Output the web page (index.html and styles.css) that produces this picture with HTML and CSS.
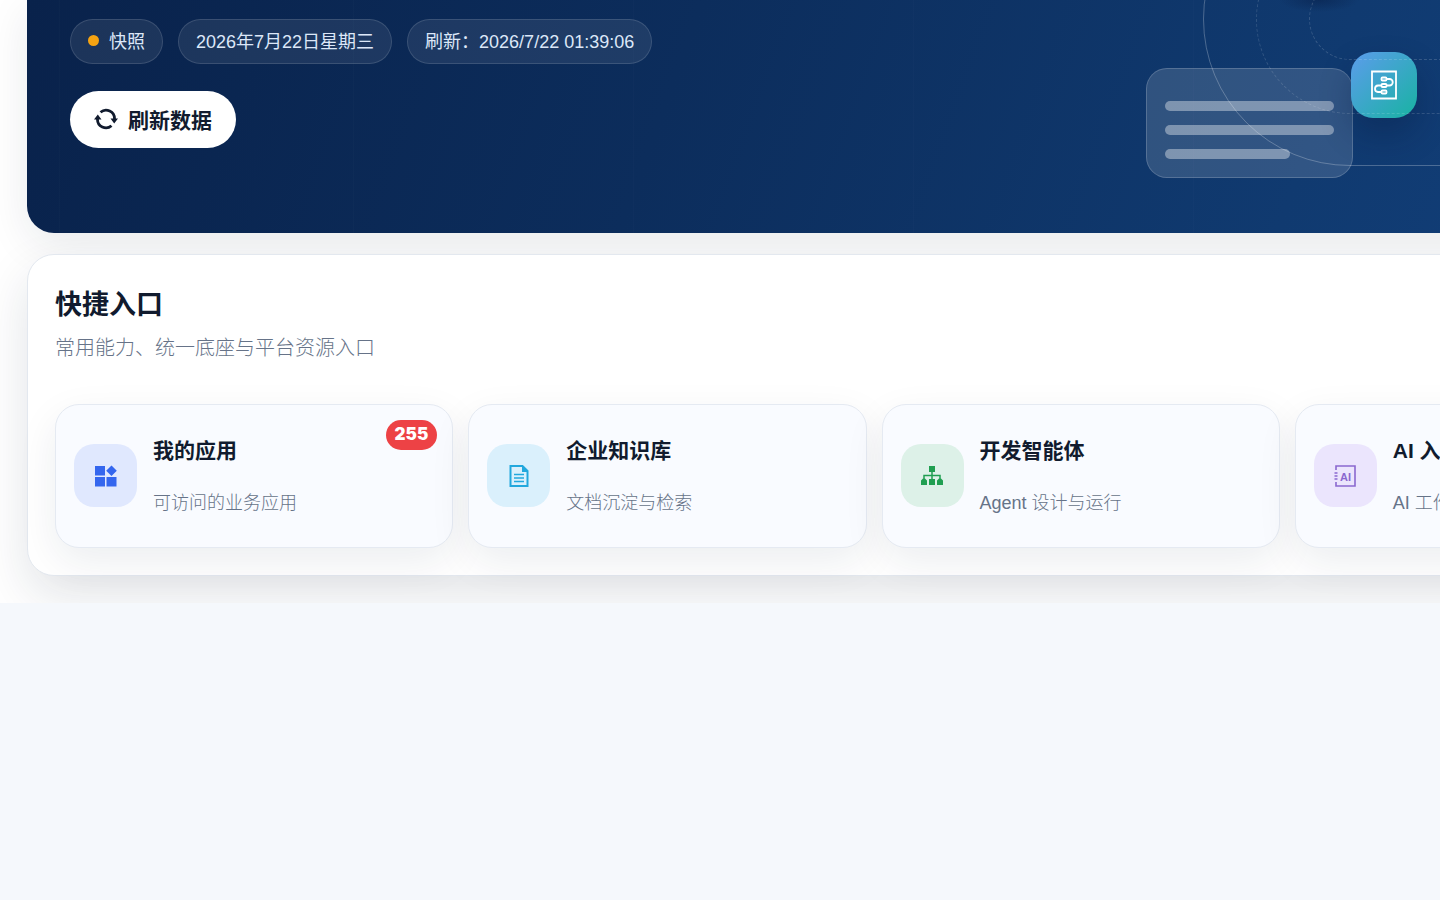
FILE: index.html
```html
<!DOCTYPE html>
<html lang="zh-CN">
<head>
<meta charset="utf-8">
<title>快捷入口</title>
<link rel="stylesheet" href="styles.css">
</head>
<body>
<main class="workspace">
  <section class="hero">
    <div class="hero-content">
      <div class="chips">
        <span class="chip"><i class="dot"></i>快照</span>
        <span class="chip">2026年7月22日星期三</span>
        <span class="chip">刷新：2026/7/22 01:39:06</span>
      </div>
      <button class="refresh" type="button">
        <svg width="24" height="24" viewBox="0 0 24 24" fill="none" stroke="currentColor" stroke-width="2.8" aria-hidden="true">
          <path d="M6.500 5.200A8.500 8.500 0 0 1 20.500 12"/><path d="M17.500 18.800A8.500 8.500 0 0 1 3.500 12"/>
          <path d="M16.500 11.500h7.500l-3.800 5zM0 12.500h7.500l-3.700-5z" fill="currentColor" stroke="none"/>
        </svg>
        <span>刷新数据</span>
      </button>
    </div>
    <div class="art" aria-hidden="true">
      <div class="sheet"><i class="bar"></i><i class="bar"></i><i class="bar short"></i></div>
      <div class="node">
        <svg width="30" height="32" viewBox="0 0 30 32" fill="none" stroke="#fff" stroke-width="1.800">
          <path d="M3 2.500h24v27H3z"/>
          <rect x="12.500" y="8.500" width="5" height="3" rx="1"/><rect x="12.500" y="15" width="5" height="3" rx="1"/><rect x="12.500" y="21.500" width="5" height="3" rx="1"/>
          <path d="M18 10h2.500a3.200 3.200 0 0 1 0 6.500H18M12 16.500H9a3.200 3.200 0 0 0-3 3.200a3.200 3.200 0 0 0 3 3.300H12"/>
        </svg>
      </div>
      <i class="ring outer"></i><i class="ring middle"></i><i class="ring inner"></i>
    </div>
  </section>

  <section class="panel">
    <h2>快捷入口</h2>
    <p class="subtitle">常用能力、统一底座与平台资源入口</p>
    <div class="cards">
      <a class="card" href="#">
        <span class="icon blue"><svg width="24" height="24" viewBox="0 0 24 24" fill="currentColor" aria-hidden="true"><path d="M1 2h10v9.500H1zM1 13h10v9.500H1zM12.500 13h10v9.500h-10zM17.500 1.500l5.300 5.200-5.300 5.300-5.300-5.300z"/></svg></span>
        <span class="text"><strong>我的应用</strong><small>可访问的业务应用</small></span>
        <b class="badge">255</b>
      </a>
      <a class="card" href="#">
        <span class="icon cyan"><svg width="24" height="24" viewBox="0 0 24 24" fill="none" stroke="currentColor" stroke-width="2" aria-hidden="true"><path d="M3.500 2h12l5 5v15h-17z"/><path d="M15 2v6h6z" fill="currentColor" stroke="none"/><path d="M7 10.500h10M7 14h10M7 17.500h10" stroke-width="1.500"/></svg></span>
        <span class="text"><strong>企业知识库</strong><small>文档沉淀与检索</small></span>
      </a>
      <a class="card" href="#">
        <span class="icon green"><svg width="24" height="24" viewBox="0 0 24 24" fill="currentColor" aria-hidden="true"><path d="M9 2h6v6H9zM1 21v-4.500l2-2h2l2 2V21zM9 15h6v6H9zM17 21v-4.500l2-2h2l2 2V21z"/><path d="M12 7v9M4 16v-4.500h16V16" fill="none" stroke="currentColor" stroke-width="1.500"/></svg></span>
        <span class="text"><strong>开发智能体</strong><small>Agent 设计与运行</small></span>
      </a>
      <a class="card" href="#">
        <span class="icon purple"><svg width="24" height="24" viewBox="0 0 24 24" fill="none" stroke="currentColor" stroke-width="1.600" aria-hidden="true"><path d="M3 6V2h19v20H3v-4M1.500 9h3M1.500 12h3M1.500 15h3"/><text x="7" y="16.500" class="ai">AI</text></svg></span>
        <span class="text"><strong>AI 入口</strong><small>AI 工作台</small></span>
      </a>
    </div>
  </section>
</main>
</body>
</html>
```
FILE: styles.css
```css
* { box-sizing: border-box; }

body {
  margin: 0;
  overflow-x: hidden;
  background: #f5f8fc;
  color: #111b2e;
  font-family: "Liberation Sans", "Noto Sans CJK SC", sans-serif;
}

.workspace {
  display: flex;
  flex-direction: column;
  gap: 21px;
  width: calc(100% + 308px);
  padding: 0 27px 27px;
  overflow: hidden;
  background: #fff;
}

.hero {
  position: relative;
  padding: 19px 43px 85px;
  border-radius: 0 0 27px 27px;
  background:
    radial-gradient(ellipse 40px 12px at 1292px 0, rgba(5, 22, 60, .4), transparent),
    repeating-linear-gradient(90deg, transparent 0 46px, rgba(255, 255, 255, .012) 46px 47px, transparent 47px 280px) 280px 0,
    linear-gradient(110deg, #09224b 0%, #0c2d5c 38%, #103a70 75%, #12407c 100%);
  box-shadow: 0 12px 44px rgba(15, 35, 60, .09);
}

.hero-content {
  display: flex;
  flex-direction: column;
  align-items: flex-start;
  gap: 27px;
}

.chips { display: flex; gap: 15px; }

.chip {
  display: flex;
  align-items: center;
  gap: 10px;
  height: 45px;
  padding: 0 17px 3px;
  border: 1px solid rgba(255, 255, 255, .13);
  border-radius: 24px;
  background: rgba(255, 255, 255, .08);
  color: #dce7f8;
  font-size: 18px;
}

.dot {
  width: 11px;
  height: 11px;
  border-radius: 50%;
  background: #f5a312;
}

.refresh {
  display: flex;
  align-items: center;
  gap: 10px;
  height: 57px;
  padding: 0 24px 2px;
  border: 0;
  border-radius: 29px;
  background: #fff;
  color: #111b2e;
  font: bold 21px "Liberation Sans", "Noto Sans CJK SC", sans-serif;
}

.art {
  position: absolute;
  inset: 0;
  overflow: hidden;
  pointer-events: none;
}

.sheet {
  position: absolute;
  top: 68px;
  left: 1119px;
  display: flex;
  flex-direction: column;
  gap: 14px;
  width: 207px;
  padding: 32px 18px 18px;
  border: 1px solid rgba(255, 255, 255, .18);
  border-radius: 21px;
  background: rgba(255, 255, 255, .14);
}

.bar {
  height: 10px;
  border-radius: 5px;
  background: rgba(255, 255, 255, .38);
}

.short { width: 125px; }

.node {
  position: absolute;
  top: 52px;
  left: 1324px;
  display: grid;
  place-items: center;
  width: 66px;
  height: 66px;
  border-radius: 22px;
  background: linear-gradient(135deg, #5c9cec, #18b3a2);
  box-shadow: 0 16px 32px rgba(5, 22, 60, .3);
}

.ring {
  position: absolute;
  right: -200px;
  border: 1px solid rgba(255, 255, 255, .25);
  border-radius: 150px;
}

.outer { top: -128px; left: 1176px; height: 294px; }
.middle { top: -75px; left: 1229px; height: 189px; border: 1px dashed rgba(255, 255, 255, .14); }
.inner { top: -22px; left: 1282px; height: 82px; border: 1px dashed rgba(255, 255, 255, .16); }

.panel {
  position: relative;
  padding: 27px;
  border: 1px solid #e3e8ef;
  border-radius: 27px;
  background: #fff;
  box-shadow: 0 20px 50px rgba(15, 35, 60, .12);
}

h2 {
  margin: 0;
  font-size: 27px;
  line-height: 46px;
}

.subtitle {
  margin: 0 0 36px;
  color: #667388;
  font-size: 20px;
  font-weight: 300;
  line-height: 40px;
}

.cards {
  display: grid;
  grid-template-columns: repeat(4, 1fr);
  gap: 15px;
}

.card {
  position: relative;
  display: flex;
  align-items: center;
  gap: 16px;
  height: 144px;
  padding: 0 18px 1px;
  border: 1px solid #e5eaf2;
  border-radius: 24px;
  background: #f9fbff;
  box-shadow: 0 14px 40px rgba(15, 35, 60, .08);
  color: inherit;
  text-decoration: none;
}

.icon {
  display: grid;
  place-items: center;
  width: 63px;
  height: 63px;
  border-radius: 20px;
}

.blue { background: #e0e8fe; color: #3466ee; }
.cyan { background: #daf0fc; color: #22a8dd; }
.green { background: #ddf1e8; color: #209f51; }
.purple { background: #ebe5fd; color: #8a68cf; }

.ai {
  fill: currentColor;
  stroke: none;
  font: bold 11px "Liberation Sans", sans-serif;
}

.text {
  display: flex;
  flex-direction: column;
  gap: 24px;
  padding-top: 3px;
  line-height: 28px;
}

.text strong { font-size: 21px; }

.text small {
  color: #667388;
  font-size: 18px;
  font-weight: 300;
}

.badge {
  position: absolute;
  top: 15px;
  right: 15px;
  padding: 0 9px 2px;
  border-radius: 15px;
  background: #ed4245;
  color: #fff;
  font: 900 17px/28px Inter, sans-serif;
}
```
